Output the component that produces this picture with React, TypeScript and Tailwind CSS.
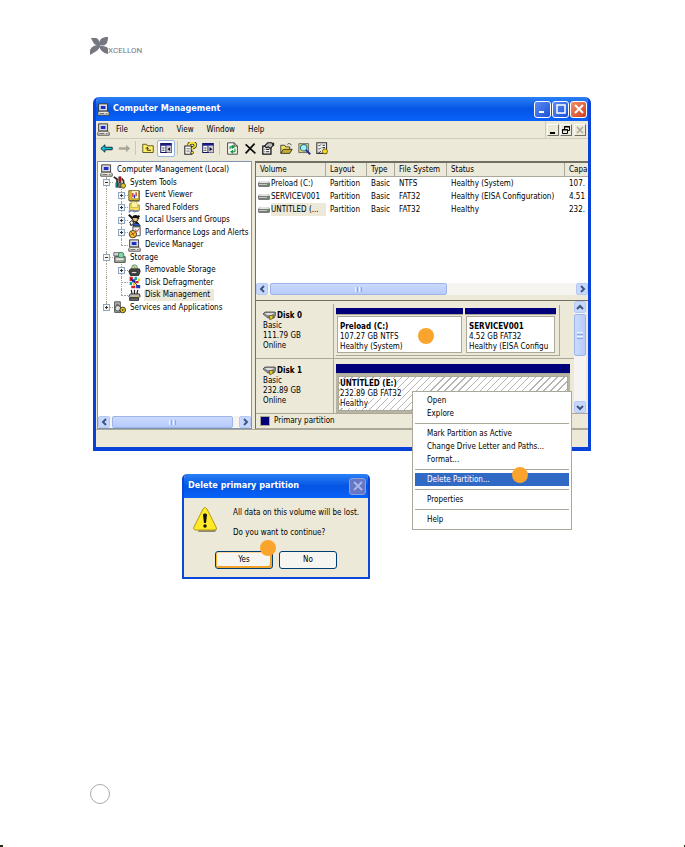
import type { ReactNode } from "react";
import clsx from "clsx";

interface IconProps {
  className?: string;
}

function Svg({ className, children }: { className?: string; children: ReactNode }) {
  return (
    <svg viewBox="0 0 16 16" className={clsx("shrink-0", className)} aria-hidden="true">
      {children}
    </svg>
  );
}

function ComputerIcon({ className }: IconProps) {
  return (
    <Svg className={className}>
      <path d="M2 1h11v9H2z" fill="#d8d5c8" stroke="#222" />
      <path d="M4 3h7v5H4z" fill="#1a2fc0" stroke="#eef" />
      <path d="M1 12l2-2h10l2 2v3H1z" fill="#e8e6da" stroke="#333" />
      <path d="M3 13h6M11 13h2" stroke="#555" />
    </Svg>
  );
}

function ToolsIcon({ className }: IconProps) {
  return (
    <Svg className={className}>
      <path d="M1 1l4 3v10" stroke="#222" strokeWidth="2" fill="none" />
      <path d="M7 1h3v6H7z" fill="#c01818" stroke="#400" strokeWidth=".6" />
      <path d="M7 8h3v6H7z" fill="#8c8c8c" stroke="#222" />
      <path d="M11 3l2 3v7" stroke="#222" strokeWidth="2" fill="none" />
      <circle cx="12.5" cy="12" r="3" fill="#d9c420" stroke="#443" />
      <path d="M3 8h2v6H3z" fill="#128074" />
    </Svg>
  );
}

function EventIcon({ className }: IconProps) {
  return (
    <Svg className={className}>
      <path d="M1 2h13v12H1z" fill="#e8c52c" stroke="#5d4a08" />
      <path d="M4 2h9v10H4z" fill="#fff8d8" stroke="#8a7630" strokeWidth=".8" />
      <path d="M6 5v5M10 4v5" stroke="#c02020" strokeWidth="1.5" />
      <path d="M8 7v4" stroke="#2030b0" strokeWidth="1.5" />
      <path d="M2 15h12" stroke="#333" />
    </Svg>
  );
}

function SharedFolderIcon({ className }: IconProps) {
  return (
    <Svg className={className}>
      <path d="M2 3h5l1 2h6v7H2z" fill="#f6df62" stroke="#9b7d17" />
      <path d="M4 1h6l2 3v4H4z" fill="#fff3a0" stroke="#b59a2a" strokeWidth=".7" />
      <path d="M1 14c2-3 5-3 7-1l5-1" stroke="#7683b5" strokeWidth="2" fill="none" />
    </Svg>
  );
}

function UsersIcon({ className }: IconProps) {
  return (
    <Svg className={className}>
      <path d="M1 1l12 12M14 2L3 14" stroke="#111" strokeWidth="2.5" />
      <circle cx="9" cy="6" r="3.5" fill="#e9bd86" stroke="#111" />
      <path d="M5 5c0-5 9-5 9 1l-4-1z" fill="#111" />
      <path d="M6 15c0-5 8-5 9 0z" fill="#2e58c8" stroke="#111" />
      <path d="M2 10l3-2 2 3-3 3z" fill="#fff" stroke="#111" />
    </Svg>
  );
}

function PerformanceIcon({ className }: IconProps) {
  return (
    <Svg className={className}>
      <path d="M6 1h9v11H6z" fill="#f2f2f2" stroke="#333" />
      <path d="M9 4l2 3 3-4" stroke="#c22" fill="none" />
      <circle cx="6" cy="10" r="4.5" fill="#f4cf35" stroke="#222" />
      <path d="M4 7l4 6M3 11l6-3" stroke="#b02222" />
    </Svg>
  );
}

function StorageIcon({ className }: IconProps) {
  return (
    <Svg className={className}>
      <path d="M1 2h7v4H1z" fill="#dcdcdc" stroke="#555" />
      <path d="M2 7h13v7H2z" fill="#a9a9a0" stroke="#333" />
      <circle cx="10" cy="5" r="3.5" fill="#8fd2a0" stroke="#276" />
      <path d="M4 10h9" stroke="#eee" strokeWidth="2" />
      <path d="M12 12h2" stroke="#1c1" />
    </Svg>
  );
}

function RemovableIcon({ className }: IconProps) {
  return (
    <Svg className={className}>
      <circle cx="8" cy="4.500" r="3.5" fill="#c6e6b0" stroke="#486" />
      <path d="M3 6h11l1 3-2 5H3L1 9z" fill="#4d4d4d" stroke="#111" />
      <path d="M4 9h7v3H4z" fill="#d9d9d9" stroke="#111" />
      <path d="M7 3l2 2" stroke="#d22" />
    </Svg>
  );
}

function DefragIcon({ className }: IconProps) {
  return (
    <Svg className={className}>
      <path d="M2 1h4v5H2zM9 6h4v3H9zM4 12h5v3H4z" fill="#d41d2c" />
      <path d="M5 4h4v4H5zM10 11h5v4h-5z" fill="#1d34c8" />
      <path d="M8 1h3v4H8zM2 7h3v4H2z" fill="#18a0a0" />
      <path d="M6 8h3v4H6zM12 3h3v3h-3z" fill="#e7cc22" />
      <path d="M3 3l10 10" stroke="#222" />
    </Svg>
  );
}

function DiskMgmtIcon({ className }: IconProps) {
  return (
    <Svg className={className}>
      <path d="M3 6h11l1 3-2 2H3L1 9z" fill="#bdbdbd" stroke="#111" />
      <path d="M2 11h11v3H2z" fill="#777" stroke="#111" />
      <path d="M4 1l1 5M8 1v5M12 1l-1 5" stroke="#222" strokeWidth="1.5" />
      <path d="M9 9h3" stroke="#d8c212" strokeWidth="2" />
    </Svg>
  );
}

function ServicesIcon({ className }: IconProps) {
  return (
    <Svg className={className}>
      <path d="M2 1h7v13H2z" fill="#b9b9b9" stroke="#333" />
      <path d="M4 4h3M4 6h3" stroke="#444" />
      <circle cx="6" cy="9" r="3.500" fill="#ddd" stroke="#333" />
      <circle cx="12" cy="11" r="3.500" fill="#e0c31c" stroke="#222" />
      <circle cx="12" cy="11" r="1" fill="#222" />
    </Svg>
  );
}

function ArrowIcon({ className, forward }: IconProps & { forward?: boolean }) {
  return (
    <Svg className={className}>
      {forward ? (
        <path d="M15 8l-5-4.500v3H1v3h9v3z" fill="#a9a797" />
      ) : (
        <path d="M1 8l5-4.500v3h9v3H6v3z" fill="#19c3d6" stroke="#07313c" strokeWidth="1.2" />
      )}
    </Svg>
  );
}

function UpFolderIcon({ className }: IconProps) {
  return (
    <Svg className={className}>
      <path d="M1 3h5l1 2h8v9H1z" fill="#ffee68" stroke="#55501a" strokeWidth="1.2" />
      <path d="M5 9l2-2 2 2M7 7v4h5" stroke="#222" strokeWidth="1.2" fill="none" />
    </Svg>
  );
}

function PaneIcon({ className, flip }: IconProps & { flip?: boolean }) {
  return (
    <Svg className={className}>
      <path d="M1 2h14v12H1z" fill="#fff" stroke="#14145c" strokeWidth="1.4" />
      <path d="M1 2h14v3H1z" fill="#1b1b8a" />
      <path d="M8 5v9" stroke="#14145c" strokeWidth="1.4" />
      <path d="M9 5h6v9H9z" fill="#c9c9d8" />
      <path d="M3 8h3M3 11h3" stroke="#333" strokeWidth="1.4" />
      <path d={flip ? "M10 7l4 2.500-4 2.500z" : "M13.500 7L10 9.500l3.500 2.500z"} fill="#111" />
    </Svg>
  );
}

function HelpIcon({ className }: IconProps) {
  return (
    <Svg className={className}>
      <path d="M1 5h8v10H1z" fill="#fff" stroke="#222" strokeWidth="1.3" />
      <path d="M3 8h4M3 10h4M3 12h4" stroke="#777" />
      <path d="M6 4c0-4 8-4 8 0 0 3-4 2-4 5" stroke="#222" strokeWidth="4" fill="none" />
      <path d="M6 4c0-4 8-4 8 0 0 3-4 2-4 5" stroke="#ffe727" strokeWidth="2.200" fill="none" />
      <circle cx="10" cy="13" r="1.700" fill="#ffe727" stroke="#222" />
    </Svg>
  );
}

function RefreshIcon({ className }: IconProps) {
  return (
    <Svg className={className}>
      <path d="M2 1h8l4 4v10H2z" fill="#fff" stroke="#222" />
      <path d="M10 1v4h4" fill="none" stroke="#222" />
      <path d="M5 9V6h4M7 4l3 2-3 2M11 8v4H7M9 10l-3 2 3 2" fill="none" stroke="#12913a" strokeWidth="1.300" />
    </Svg>
  );
}

function CrossIcon({ className }: IconProps) {
  return (
    <Svg className={className}>
      <path d="M2 3l12 11M13 2L2 14" stroke="#111" strokeWidth="2.200" />
    </Svg>
  );
}

function PropertiesIcon({ className }: IconProps) {
  return (
    <Svg className={className}>
      <path d="M1 5h10v10H1z" fill="#fff" stroke="#111" strokeWidth="1.600" />
      <path d="M3 9h1M3 12h1M5 9h4M5 12h4" stroke="#222" strokeWidth="1.500" />
      <path d="M3 5l4-4h5l2 3-4 4-2-2-3 1z" fill="#b9b9b9" stroke="#111" strokeWidth="1.300" />
      <path d="M13 1h2v4h-2z" fill="#222" />
    </Svg>
  );
}

function OpenFolderIcon({ className }: IconProps) {
  return (
    <Svg className={className}>
      <path d="M1 14V4h5l1 2h5v3" fill="#f5e35b" stroke="#222" />
      <path d="M1 14l3-5h11l-3 5z" fill="#c6ad28" stroke="#222" />
      <path d="M9 3c2-2 4-1 5 1" stroke="#222" fill="none" />
    </Svg>
  );
}

function SearchIcon({ className }: IconProps) {
  return (
    <Svg className={className}>
      <path d="M1 2h12v11H1z" fill="#dfd46a" stroke="#555" />
      <circle cx="7" cy="7" r="4" fill="#9ff0f4" stroke="#2a6a86" strokeWidth="1.300" />
      <path d="M10 10l5 5" stroke="#1a2fae" strokeWidth="2.400" />
    </Svg>
  );
}

function SettingsIcon({ className }: IconProps) {
  return (
    <Svg className={className}>
      <path d="M1 1h12v13H1z" fill="#eee" stroke="#333" strokeWidth="1.300" />
      <path d="M3 4l1 1 2-2M3 8l1 1 2-2M3 12l1 1 2-2" fill="none" stroke="#111" />
      <path d="M8 4h3M8 7h3" stroke="#333" strokeWidth="1.400" />
      <path d="M11 8v7M7.500 11.500h7M8.500 9l5 5M13.500 9l-5 5" stroke="#6e5b00" strokeWidth="2" />
      <circle cx="11" cy="11.500" r="2.500" fill="#f1dc28" />
    </Svg>
  );
}

function DriveIcon() {
  return (
    <svg viewBox="0 0 12 8" className="h-2 w-3 shrink-0" aria-hidden="true">
      <path d="M2 1h8l2 2v3l-1 1H1L0 6V3z" fill="#7b7b7b" />
      <path d="M2 1h8l1 2H1z" fill="#e3e3e3" />
      <path d="M1 4h10v1H1z" fill="#c5c5c5" />
      <path d="M9 4h2v1H9z" fill="#24b324" />
    </svg>
  );
}

function DiskIcon() {
  return (
    <svg viewBox="0 0 13 10" className="h-[10px] w-[13px] shrink-0" aria-hidden="true">
      <path d="M2 1h10l1 2-2 4H5L0 3z" fill="#8f8f8f" stroke="#444" strokeWidth=".8" />
      <path d="M2 2h9L9 4H4z" fill="#dedede" />
      <path d="M6 5l4-1v3L7 9z" fill="#e1cb1c" stroke="#333" strokeWidth=".6" />
    </svg>
  );
}

function Logo() {
  return (
    <a href="#" aria-label="Xcellon" className="flex w-fit items-end text-[#74777f]">
      <svg viewBox="0 0 18 18" className="size-[18px]" fill="currentColor" aria-hidden="true">
        <path d="M1 1h5c3 1 4 4 4 8-5 0-7-3-9-8z" />
        <path d="M18 0c-6 0-9 2-9 8 6 2 9-1 9-8z" />
        <path d="M0 18v-5c2-4 5-5 10-5 0 5-4 6-10 10z" />
        <path d="M18 17v-5c-1-3-4-3-9-3 1 4 4 7 9 8z" />
      </svg>
      <span className="font-[Roboto,sans-serif] text-[8px] leading-[8px]">XCELLON</span>
    </a>
  );
}

const treeItems = [
  { label: "Computer Management (Local)", level: 0, Icon: ComputerIcon },
  { label: "System Tools", level: 1, sign: "-", Icon: ToolsIcon },
  { label: "Event Viewer", level: 2, sign: "+", Icon: EventIcon },
  { label: "Shared Folders", level: 2, sign: "+", Icon: SharedFolderIcon },
  { label: "Local Users and Groups", level: 2, sign: "+", Icon: UsersIcon },
  { label: "Performance Logs and Alerts", level: 2, sign: "+", Icon: PerformanceIcon },
  { label: "Device Manager", level: 2, last: true, Icon: ComputerIcon },
  { label: "Storage", level: 1, sign: "-", Icon: StorageIcon },
  { label: "Removable Storage", level: 2, sign: "+", Icon: RemovableIcon },
  { label: "Disk Defragmenter", level: 2, Icon: DefragIcon },
  { label: "Disk Management", level: 2, last: true, selected: true, Icon: DiskMgmtIcon },
  { label: "Services and Applications", level: 1, sign: "+", last: true, Icon: ServicesIcon },
];

const volumes = [
  { name: "Preload (C:)", fs: "NTFS", status: "Healthy (System)", capacity: "107." },
  { name: "SERVICEV001", fs: "FAT32", status: "Healthy (EISA Configuration)", capacity: "4.51" },
  { name: "UNTITLED (...", fs: "FAT32", status: "Healthy", capacity: "232.", selected: true },
];

const menuGroups = [
  ["Open", "Explore"],
  ["Mark Partition as Active", "Change Drive Letter and Paths...", "Format..."],
  ["Delete Partition..."],
  ["Properties"],
  ["Help"],
];

const toolGroups = [
  [
    { label: "Back", icon: <ArrowIcon className="size-[13px]" /> },
    { label: "Forward", icon: <ArrowIcon forward className="size-[13px]" /> },
  ],
  [
    { label: "Up one level", icon: <UpFolderIcon className="size-3" /> },
    { label: "Show console tree", icon: <PaneIcon className="size-3" />, active: true },
  ],
  [
    { label: "Help", icon: <HelpIcon className="size-[13px]" /> },
    { label: "Show action pane", icon: <PaneIcon flip className="size-3" /> },
  ],
  [
    { label: "Refresh", icon: <RefreshIcon className="size-[13px]" /> },
    { label: "Delete", icon: <CrossIcon className="size-[13px]" /> },
    { label: "Properties", icon: <PropertiesIcon className="size-[13px]" /> },
    { label: "Open", icon: <OpenFolderIcon className="size-[13px]" /> },
    { label: "Find", icon: <SearchIcon className="size-[13px]" /> },
    { label: "Settings", icon: <SettingsIcon className="size-[13px]" /> },
  ],
];

function Tree() {
  return (
    <ul className="flex h-[150px] flex-col">
      {treeItems.map(({ label, level, sign, last, selected, Icon }) => (
        <li
          key={label}
          className={clsx(
            "relative flex min-h-0 flex-1 items-center whitespace-nowrap",
            level === 0 && "pl-0.5",
            level === 1 && "pl-[5px]",
            level === 2 && "pl-5"
          )}
        >
          {/* Guide lines */}
          {level > 0 && (
            <span
              className={clsx(
                "absolute top-0 left-2 border-l border-dotted border-[#a5a294]",
                level === 1 && last ? "h-1/2" : "h-full"
              )}
            />
          )}
          {level === 2 && (
            <span
              className={clsx(
                "absolute top-0 left-[23px] border-l border-dotted border-[#a5a294]",
                last ? "h-1/2" : "h-full"
              )}
            />
          )}
          {sign && (
            <button
              aria-label={sign === "+" ? `Expand ${label}` : `Collapse ${label}`}
              className="relative flex size-[7px] shrink-0 items-center justify-center border border-[#8fa6c0] bg-[#f6f5ef]"
            >
              <span className="absolute h-px w-[3px] bg-[#333]" />
              {sign === "+" && <span className="absolute h-[3px] w-px bg-[#333]" />}
            </button>
          )}
          {!sign && level > 0 && (
            <span className="ml-[3px] w-1 shrink-0 border-t border-dotted border-[#a5a294]" />
          )}
          {level > 0 && <span className="w-[3px] shrink-0 border-t border-dotted border-[#a5a294]" />}
          <Icon className="size-[13px]" />
          <span className={clsx("ml-[3px] px-px leading-3", selected && "bg-[#ece9d8] pr-1")}>{label}</span>
        </li>
      ))}
    </ul>
  );
}

function ScrollButton({ dir }: { dir: "left" | "right" | "up" | "down" }) {
  const paths = {
    left: "M7 2L4 5l3 3",
    right: "M4 2l3 3-3 3",
    up: "M2 7l3-3 3 3",
    down: "M2 4l3 3 3-3",
  };
  return (
    <button
      aria-label={`Scroll ${dir}`}
      className="flex size-3 shrink-0 items-center justify-center rounded-xs border border-[#b5c8f5] bg-[#c8d8fc]"
    >
      <svg viewBox="0 0 10 10" className="size-[10px]" fill="none" stroke="#3d5582" strokeWidth="2">
        <path d={paths[dir]} />
      </svg>
    </button>
  );
}

function HScroll({ thumb }: { thumb: string }) {
  return (
    <div className="flex h-3 shrink-0 gap-0.5 bg-[#f5f4f0]">
      <ScrollButton dir="left" />
      <div className="flex-1">
        <div
          className={clsx(
            "flex h-3 items-center justify-center gap-px rounded-xs border border-[#9fb5ea] bg-linear-to-b from-[#cbdafd] to-[#b5cbfb]",
            thumb
          )}
        >
          <span className="h-[5px] w-px bg-[#eef4fe]" />
          <span className="h-[5px] w-px bg-[#8ca8e4]" />
          <span className="h-[5px] w-px bg-[#eef4fe]" />
          <span className="h-[5px] w-px bg-[#8ca8e4]" />
        </div>
      </div>
      <ScrollButton dir="right" />
    </div>
  );
}

function VScroll() {
  return (
    <div className="flex w-3 shrink-0 flex-col gap-px bg-[#f5f4f0]">
      <ScrollButton dir="up" />
      <div className="flex-1">
        <div className="flex h-[42px] w-3 flex-col items-center justify-center gap-px rounded-xs border border-[#9fb5ea] bg-linear-to-r from-[#cbdafd] to-[#b5cbfb]">
          <span className="h-px w-[6px] bg-[#eef4fe]" />
          <span className="h-px w-[6px] bg-[#8ca8e4]" />
          <span className="h-px w-[6px] bg-[#eef4fe]" />
          <span className="h-px w-[6px] bg-[#8ca8e4]" />
        </div>
      </div>
      <ScrollButton dir="down" />
    </div>
  );
}

function VolumeTable() {
  const head = "border-r border-b border-[#aca899] bg-[#ebe9da] pl-1 text-left font-normal";
  return (
    <div className="flex-1 overflow-hidden bg-white">
      <table className="w-full table-fixed border-separate border-spacing-0 whitespace-nowrap">
        <thead>
          <tr className="h-[14px] leading-3">
            <th className={clsx(head, "w-[70px]")}>Volume</th>
            <th className={clsx(head, "w-[41px]")}>Layout</th>
            <th className={clsx(head, "w-7")}>Type</th>
            <th className={clsx(head, "w-[52px]")}>File System</th>
            <th className={clsx(head, "w-[118px]")}>Status</th>
            <th className={clsx(head, "border-r-0")}>Capa</th>
          </tr>
        </thead>
        <tbody>
          {volumes.map((v) => (
            <tr key={v.name} className="h-[13px] leading-[13px]">
              <td>
                <div className="flex items-center gap-px pl-0.5">
                  <DriveIcon />
                  <span className={clsx("flex-1", v.selected && "bg-[#ece9d8]")}>{v.name}</span>
                </div>
              </td>
              <td className="pl-1">Partition</td>
              <td className="pl-1">Basic</td>
              <td className="pl-1">{v.fs}</td>
              <td className="pl-1">{v.status}</td>
              <td className="pl-1">{v.capacity}</td>
            </tr>
          ))}
        </tbody>
      </table>
    </div>
  );
}

function DiskLabel({ name, size }: { name: string; size: string }) {
  return (
    <div className="w-[78px] shrink-0 border-r border-[#aca899] pt-[7px] pl-[7px] leading-[10px]">
      <div className="flex items-center gap-px font-bold">
        <DiskIcon />
        {name}
      </div>
      <p>Basic</p>
      <p>{size}</p>
      <p>Online</p>
    </div>
  );
}

interface PartitionProps {
  className?: string;
  name: string;
  size: string;
  status: string;
  hatched?: boolean;
}

function Partition({ className, name, size, status, hatched }: PartitionProps) {
  return (
    <div className={clsx("flex flex-col", className)}>
      <div className="h-[9px] bg-[#00007b]" />
      <div className={clsx("flex-1 border-t border-[#aca899]", hatched ? "bg-[#b8b4a5] p-0.5" : "p-px")}>
        <div
          className={clsx(
            "h-full overflow-hidden border border-[#aca899] leading-[10px] whitespace-nowrap",
            hatched
              ? "bg-[repeating-linear-gradient(135deg,#fff_0,#fff_4px,#b4b4b4_4px,#b4b4b4_5px)] pt-0.5 pl-px"
              : "bg-white pt-[5px] pl-0.5"
          )}
        >
          <p className="font-bold">
            <span className={clsx(hatched && "bg-white")}>{name}</span>
          </p>
          <p>
            <span className={clsx(hatched && "bg-white")}>{size}</span>
          </p>
          <p>
            <span className={clsx(hatched && "bg-white")}>{status}</span>
          </p>
        </div>
      </div>
    </div>
  );
}

function Marker({ className }: IconProps) {
  return <span className={clsx("absolute size-4 rounded-full bg-[#faa42e]", className)} />;
}

function WindowButton({ label, children, close }: { label: string; children: ReactNode; close?: boolean }) {
  return (
    <button
      aria-label={label}
      className={clsx(
        "flex size-[17px] items-center justify-center rounded-[3px] border border-white",
        close ? "bg-linear-to-br from-[#f0906c] to-[#cf3a12]" : "bg-linear-to-br from-[#5c8cf4] to-[#1c4fd6]"
      )}
    >
      <svg viewBox="0 0 14 14" className="size-[14px]" fill="none" stroke="#fff" strokeWidth="2">
        {children}
      </svg>
    </button>
  );
}

function MdiButton({ label, children, disabled }: { label: string; children: ReactNode; disabled?: boolean }) {
  return (
    <button
      aria-label={label}
      disabled={disabled}
      className={clsx(
        "flex size-3 items-center justify-center border border-t-white border-r-[#716f64] border-b-[#716f64] border-l-white bg-[#ece9d8]",
        disabled ? "text-[#aca899]" : "text-black"
      )}
    >
      <svg viewBox="0 0 10 10" className="size-[10px]" fill="none" stroke="currentColor">
        {children}
      </svg>
    </button>
  );
}

function ContextMenu() {
  return (
    <div
      role="menu"
      className="absolute top-[294px] left-[319px] w-40 border border-[#aca899] bg-white p-0.5 pb-[3px]"
    >
      {menuGroups.map((group, i) => (
        <div key={group[0]}>
          {i > 0 && <hr className="my-[3px] border-[#aca899]" />}
          {group.map((item) => (
            <button
              key={item}
              role="menuitem"
              className={clsx(
                "block h-[13px] w-full pl-3 text-left leading-[13px] whitespace-nowrap",
                item === "Delete Partition..." && "bg-[#316ac5] text-white"
              )}
            >
              {item}
            </button>
          ))}
        </div>
      ))}
      <Marker className="top-[75px] left-[99px]" />
    </div>
  );
}

function ConfirmDialog() {
  return (
    <section
      role="dialog"
      aria-labelledby="confirm-title"
      className="mt-[23px] ml-[89px] w-[188px] overflow-hidden rounded-t-[5px] border-2 border-t-0 border-[#0a46d8] bg-[#ece9d8]"
    >
      <header className="flex h-6 items-center justify-between bg-linear-to-b from-[#2a80f5] via-[#0554e4] to-[#0862fa] pr-0.5 pl-1">
        <h2 id="confirm-title" className="text-[9px] font-bold text-white">
          Delete primary partition
        </h2>
        <button
          aria-label="Close"
          className="flex size-[17px] items-center justify-center rounded-[3px] border border-[#8a9fe2] bg-[#6577c5]"
        >
          <svg viewBox="0 0 14 14" className="size-[14px]" stroke="#a9b6e8" strokeWidth="2">
            <path d="M3 3l8 8M11 3l-8 8" />
          </svg>
        </button>
      </header>
      <div className="flex gap-[15px] pt-2 pl-[9px]">
        <svg viewBox="0 0 25 25" className="mt-px size-[25px] shrink-0" aria-hidden="true">
          <path d="M12 3L24 22l-2 3H5z" fill="#8d8a7c" />
          <path d="M11 1c1-1 2 0 3 1l9 18c1 2 0 3-2 3H3c-2 0-3-1-2-3L10 2z" fill="#ffe92a" stroke="#b89a08" />
          <path d="M10 8c0-2 4-2 4 0l-1 8h-2z" fill="#111" />
          <circle cx="12" cy="19" r="1.700" fill="#111" />
        </svg>
        <div className="leading-[10px] whitespace-nowrap">
          <p className="pt-0.5">All data on this volume will be lost.</p>
          <p className="pt-[10px]">Do you want to continue?</p>
        </div>
      </div>
      <div className="flex justify-center gap-[6px] pt-[13px] pb-2">
        <div className="relative">
          <button className="h-[18px] w-[58px] rounded-[3px] border border-[#003c74] bg-[#f6f5ef] leading-3 shadow-[inset_0_1px_0_#fbd59a,inset_1px_0_0_#f8b636,inset_-2px_-2px_0_#f3a52b]">
            Yes
          </button>
          <Marker className="-top-[11px] left-[45px]" />
        </div>
        <button className="h-[18px] w-[58px] rounded-[3px] border border-[#003c74] bg-[#f6f5ef] leading-3">No</button>
      </div>
    </section>
  );
}

export default function App() {
  return (
    <div className="flex min-h-screen flex-col bg-white font-['DejaVu_Sans_Condensed','DejaVu_Sans',sans-serif] text-[8px] text-black">
      <header className="pt-[37px] pl-[90px]">
        <Logo />
      </header>

      <main className="relative mt-[42px] mr-[94px] ml-[93px]">
        <section className="overflow-hidden rounded-t-[6px] border-x-[3px] border-b-4 border-[#0842d8] bg-[#ece9d8]">
          {/* Title bar */}
          <header className="flex h-6 items-center gap-[3px] bg-linear-to-b from-[#2a80f5] via-[#0554e4] to-[#0862fa] px-px">
            <ComputerIcon className="size-[13px]" />
            <h1 className="flex-1 text-[9px] font-bold text-white">Computer Management</h1>
            <div className="flex gap-px">
              <WindowButton label="Minimize">
                <path d="M3 10h5" />
              </WindowButton>
              <WindowButton label="Maximize">
                <path d="M3 3h8v8H3z" strokeWidth="1.500" />
              </WindowButton>
              <WindowButton label="Close" close>
                <path d="M3 3l8 8M11 3l-8 8" />
              </WindowButton>
            </div>
          </header>

          {/* Menu bar */}
          <div className="flex h-[18px] items-center border-b border-[#d0cdbd] pr-0.5 pl-px">
            <ComputerIcon className="mr-[5px] size-[13px]" />
            <nav className="flex flex-1 gap-[13px] pl-px">
              {["File", "Action", "View", "Window", "Help"].map((item) => (
                <button key={item}>{item}</button>
              ))}
            </nav>
            <div className="flex h-full items-center gap-px border-l border-[#d0cdbd] pl-px">
              <MdiButton label="Minimize console">
                <path d="M2 8h5" strokeWidth="2" />
              </MdiButton>
              <MdiButton label="Restore console">
                <path d="M3.500 4V1.500h5v4H7M3 2h6" />
                <path d="M1.500 4.500h5v4h-5zM1 5h6" />
              </MdiButton>
              <div className="ml-px">
                <MdiButton label="Close console" disabled>
                  <path d="M2 2l6 6M8 2L2 8" strokeWidth="1.500" />
                </MdiButton>
              </div>
            </div>
          </div>

          {/* Toolbar */}
          <div className="flex h-[22px] items-center pb-1 pl-px">
            {toolGroups.map((group, i) => (
              <div key={group[0].label} className="flex items-center">
                {i > 0 && <span className="mr-[3px] ml-0.5 h-[14px] w-px bg-[#cbc8b8]" />}
                {group.map((tool) => (
                  <button
                    key={tool.label}
                    aria-label={tool.label}
                    className={clsx(
                      "flex h-[17px] w-[18px] items-center justify-center",
                      "active" in tool && "rounded-xs border border-[#98b5e2] bg-white"
                    )}
                  >
                    {tool.icon}
                  </button>
                ))}
              </div>
            ))}
          </div>

          <div className="flex h-[268px] gap-[3px] pl-px">
            {/* Console tree */}
            <aside className="flex w-[155px] shrink-0 flex-col overflow-hidden border border-[#8096ae] bg-white">
              <div className="flex-1 pt-0.5">
                <Tree />
              </div>
              <HScroll thumb="w-[121px]" />
            </aside>

            {/* Disk pane */}
            <div className="flex min-w-0 flex-1 flex-col border-t-2 border-l border-[#716f64]">
              <VolumeTable />
              <HScroll thumb="w-[177px]" />
              <div className="h-[6px] shrink-0 border-b border-[#716f64]" />
              <div className="flex h-[112px] shrink-0 pr-0.5">
                <div className="flex min-w-0 flex-1 flex-col pt-[3px]">
                  <div className="flex h-[55px] border-b border-[#aca899]">
                    <DiskLabel name="Disk 0" size="111.79 GB" />
                    <div className="flex flex-1 pt-px pb-0.5 pl-0.5">
                      <div className="mr-[14px] flex flex-1 gap-0.5 border-r border-b border-[#aca899] pt-[3px] pr-[3px] pb-px">
                        <div className="relative flex flex-[7]">
                          <Partition
                            className="flex-1"
                            name="Preload  (C:)"
                            size="107.27 GB NTFS"
                            status="Healthy (System)"
                          />
                          <Marker className="top-5 left-[82px]" />
                        </div>
                        <Partition
                          className="w-[91px]"
                          name="SERVICEV001"
                          size="4.52 GB FAT32"
                          status="Healthy (EISA Configu"
                        />
                      </div>
                    </div>
                  </div>
                  <div className="flex flex-1">
                    <DiskLabel name="Disk 1" size="232.89 GB" />
                    <div className="flex flex-1 pt-[5px] pr-1 pl-0.5">
                      <Partition
                        className="flex-1"
                        name="UNTITLED  (E:)"
                        size="232.89 GB FAT32"
                        status="Healthy"
                        hatched
                      />
                    </div>
                  </div>
                </div>
                <VScroll />
              </div>
              <div className="flex h-4 shrink-0 items-center gap-1 border-y border-[#aca899] pl-1">
                <span className="size-[10px] border border-[#aca899] bg-[#00007b]" />
                Primary partition
              </div>
            </div>
          </div>

          {/* Status bar */}
          <div className="h-[18px] border-t border-[#aca899]" />
        </section>

        <ContextMenu />
        <ConfirmDialog />
      </main>

      <footer className="mt-auto">
        <div className="mb-[41px] ml-[90px] size-5 rounded-full border border-[#aaa]" />
        <div className="flex justify-between">
          <span className="h-0.5 w-[3px] bg-[#22301c]" />
          <span className="h-0.5 w-px bg-[#22301c]" />
        </div>
      </footer>
    </div>
  );
}
